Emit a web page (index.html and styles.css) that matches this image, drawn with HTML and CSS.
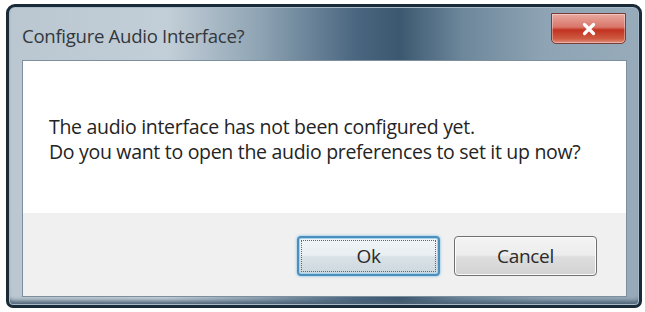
FILE: index.html
```html
<!DOCTYPE html>
<html lang="en">
<head>
    <meta charset="UTF-8">
    <meta name="viewport" content="width=device-width, initial-scale=1.0">
    <title>Configure Audio Interface?</title>
    <link rel="stylesheet" href="styles.css">
</head>
<body>
    <div class="window">
        <div class="titlebar">
            <span class="title">Configure Audio Interface?</span>
            <button class="close" aria-label="Close">
                <svg width="16" height="14" viewBox="0 0 16 14">
                    <path d="M3.5 2.5 L12.5 11.5 M12.5 2.5 L3.5 11.5" stroke="#fff" stroke-width="3.2" stroke-linecap="round"/>
                </svg>
            </button>
        </div>
        <div class="content">
            <div class="message">
                <p>The audio interface has not been configured yet.</p>
                <p>Do you want to open the audio preferences to set it up now?</p>
            </div>
            <div class="actions">
                <button class="btn btn-default"><span>Ok</span></button>
                <button class="btn">Cancel</button>
            </div>
        </div>
    </div>
</body>
</html>
```

FILE: styles.css
```css
html, body {
    margin: 0;
    padding: 0;
}
body {
    background: #fff;
    width: 645px;
    height: 312px;
    overflow: hidden;
    font-family: "Open Sans", "Noto Sans", sans-serif;
}
.window {
    box-sizing: border-box;
    width: 636px;
    height: 304px;
    margin: 4px 0 0 6px;
    border: 3px solid #1b2a37;
    border-radius: 9px 9px 7px 7px;
    background: linear-gradient(90deg, #bac7d0 0%, #c3cfd8 25%, #8ea3b3 40%, #4a6680 55%, #3c5870 62%, #6d879b 72%, #8ea4b4 85%, #97abba 100%);
    padding: 0 12px 8px 13px;
    display: flex;
    flex-direction: column;
    box-shadow: inset 0 0 0 1px #a9bccb, inset 0 -6px 4px -2px #4d6276;
}
.titlebar {
    height: 53px;
    display: flex;
    align-items: flex-start;
    justify-content: space-between;
}
.title {
    margin-top: 16px;
    font-size: 18.6px;
    color: #33383d;
    letter-spacing: -0.3px;
}
.close {
    margin-top: 6px;
    margin-right: 1px;
    width: 75px;
    height: 31px;
    border: 1px solid #7a3a35;
    border-radius: 0 0 5px 5px;
    background: linear-gradient(180deg, #e9a99e 0%, #d9766a 45%, #c2321f 55%, #cf5a42 85%, #e08f7d 100%);
    display: flex;
    align-items: center;
    justify-content: center;
    padding: 0;
    box-shadow: inset 0 0 0 1px rgba(255, 255, 255, 0.35);
}
.content {
    flex: 1;
    display: flex;
    flex-direction: column;
    border: 1px solid #7d8f9d;
    background: #f0f0f0;
}
.message {
    height: 152px;
    background: #fff;
    box-sizing: border-box;
    padding: 53px 0 0 26px;
    color: #242424;
    font-size: 19.5px;
    letter-spacing: -0.3px;
    line-height: 25px;
}
.message p {
    margin: 0;
}
.actions {
    flex: 1;
    display: flex;
    justify-content: flex-end;
    gap: 14px;
    padding: 23px 29px 0 0;
}
.btn {
    box-sizing: border-box;
    width: 143px;
    height: 40px;
    border: 1px solid #707070;
    border-radius: 4px;
    background: linear-gradient(180deg, #f4f4f4 0%, #ececec 48%, #dedede 52%, #d2d2d2 100%);
    font-family: "Open Sans", "Noto Sans", sans-serif;
    font-size: 19px;
    color: #2a2a2a;
    letter-spacing: -0.3px;
    box-shadow: inset 0 0 0 1px #fcfcfc;
    padding: 0;
}
.btn-default {
    border: 2px solid #4a8fbd;
    background: linear-gradient(180deg, #f2f6f8 0%, #e8eef1 48%, #d9e2e7 52%, #ccd7dd 100%);
    box-shadow: 0 0 3px #6fb3dc, inset 0 0 0 1px #a6d2ea;
    padding: 2px;
}
.btn-default span {
    display: flex;
    align-items: center;
    justify-content: center;
    height: 100%;
    outline: 1px dotted #3f6f96;
    outline-offset: -1px;
}
```
